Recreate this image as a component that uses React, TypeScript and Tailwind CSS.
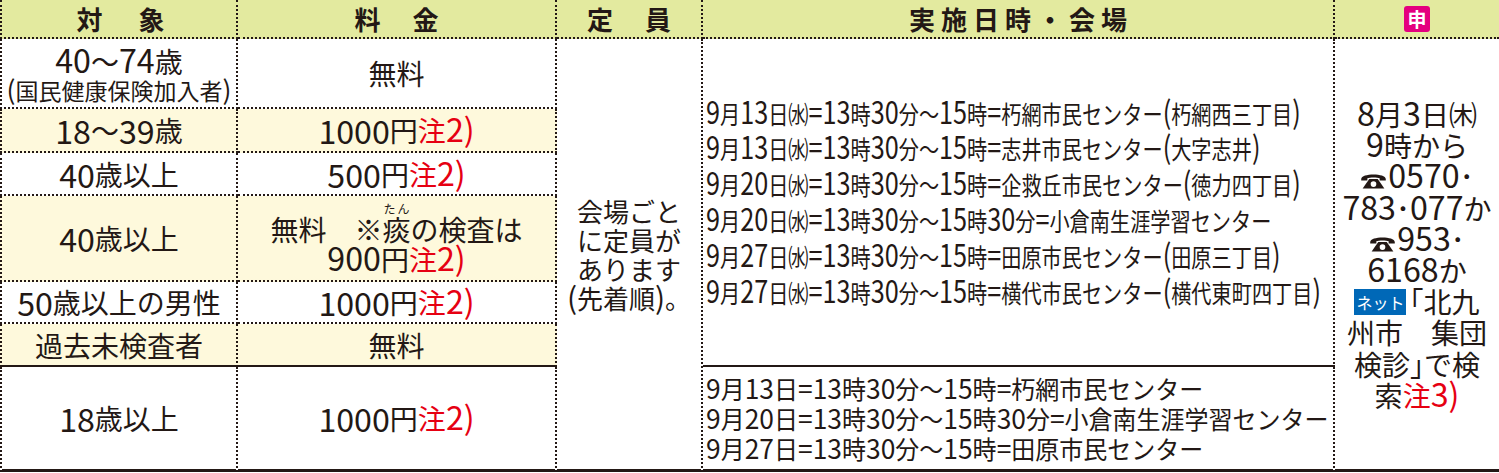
import React from "react";

const LATIN = /([0-9=()]+)/;

// digits and ascii punctuation sit a bit larger than the kana, as in print
function Mix({ text, latin = "text-[1.15em]" }: { text: string; latin?: string }) {
  return (
    <>
      {text.split(LATIN).map((part, i) =>
        i % 2 === 1 ? (
          <span key={i} className={`${latin} leading-[0]`}>
            {part}
          </span>
        ) : (
          <React.Fragment key={i}>{part}</React.Fragment>
        ),
      )}
    </>
  );
}

function Note({ text }: { text: string }) {
  return (
    <span className="text-[#e60012]">
      <Mix text={text} />
    </span>
  );
}

function Phone() {
  return (
    <svg viewBox="0 0 28 18" className="mr-[1px] inline-block h-[17px] w-[27px] align-[-1px]">
      <path
        d="M1 7.5C1 1.2 27 1.2 27 7.5V9H20.5V6.6C18 5.4 10 5.4 7.5 6.6V9H1Z"
        fill="#231815"
      />
      <path d="M9.5 7.5H18.5L25.5 17.5H2.5Z" fill="#231815" />
      <circle cx="14" cy="12.8" r="3" fill="#fff" />
    </svg>
  );
}

const upperLines = [
  "9月13日㈬=13時30分〜15時=朽網市民センター(朽網西三丁目)",
  "9月13日㈬=13時30分〜15時=志井市民センター(大字志井)",
  "9月20日㈬=13時30分〜15時=企救丘市民センター(徳力四丁目)",
  "9月20日㈬=13時30分〜15時30分=小倉南生涯学習センター",
  "9月27日㈬=13時30分〜15時=田原市民センター(田原三丁目)",
  "9月27日㈬=13時30分〜15時=横代市民センター(横代東町四丁目)",
];

const lowerLines = [
  "9月13日=13時30分〜15時=朽網市民センター",
  "9月20日=13時30分〜15時30分=小倉南生涯学習センター",
  "9月27日=13時30分〜15時=田原市民センター",
];

const head =
  "flex items-center justify-center bg-[#e3ea9f] border-b-2 border-dotted border-[#231815] text-[26px] font-bold leading-none";
const left =
  "flex items-center justify-center border-l-2 border-r-2 border-b-2 border-dotted border-[#231815] text-[28px] leading-[30px] whitespace-nowrap";
const mid =
  "flex items-center justify-center border-r-2 border-b-2 border-dotted border-[#231815] text-[28px] leading-[30px] whitespace-nowrap";
const cream = "bg-[#fef9dc]";
const solidBottom = "[border-bottom-style:solid]";

export default function App() {
  return (
    <div className="h-[473px] w-[1499px] bg-white font-['Noto_Sans_CJK_JP',sans-serif] text-[#231815]">
      <div className="grid grid-cols-[238px_319px_146px_632px_164px] grid-rows-[39px_70px_44px_43px_86px_42px_43px_105px]">
        {/* header */}
        <div className={`${head} border-l-2 border-r-2 pl-[8px] tracking-[5px]`}>対　象</div>
        <div className={`${head} border-r-2 pl-[3px] tracking-[3px]`}>料　金</div>
        <div className={`${head} border-r-2 pl-[3px] tracking-[3px]`}>定　員</div>
        <div className={`${head} border-r-2 pl-[6px] tracking-[6px]`}>実施日時・会場</div>
        <div className={head}>
          <span className="flex h-[26px] w-[26px] items-center justify-center rounded-[3px] bg-[#e4007f] text-[19px] font-bold leading-none text-white">
            申
          </span>
        </div>

        {/* row 1 */}
        <div className={`${left} col-start-1 row-start-2 flex-col pt-[5px]`}>
          <div className="leading-[29px]">
            <Mix text="40〜74歳" />
          </div>
          <div className="text-[23px] leading-[29px]">
            <Mix text="(国民健康保険加入者)" />
          </div>
        </div>
        <div className={`${mid} col-start-2 row-start-2`}>無料</div>

        {/* 定員 */}
        <div
          className={`col-start-3 row-start-2 row-span-7 flex flex-col items-center justify-center border-r-2 border-b-[3px] border-dotted border-[#231815] ${solidBottom} text-[26px] leading-[29px] whitespace-nowrap`}
        >
          <div>会場ごと</div>
          <div>に定員が</div>
          <div>あります</div>
          <div>
            <Mix text="(先着順)" />。
          </div>
        </div>

        {/* 実施日時・会場 upper */}
        <div
          className={`col-start-4 row-start-2 row-span-6 flex flex-col justify-center border-r-2 border-b-2 border-dotted border-[#231815] ${solidBottom} pl-[3px] pt-[2px] text-[25px] leading-[35.8px]`}
        >
          <div className="origin-left scale-x-[0.807] whitespace-nowrap">
            {upperLines.map((line) => (
              <div key={line}>
                <Mix text={line} latin="text-[1.25em]" />
              </div>
            ))}
          </div>
        </div>

        {/* 申込 */}
        <div
          className={`col-start-5 row-start-2 row-span-7 flex flex-col items-center justify-center border-b-[3px] border-solid border-[#231815] pt-[2px] text-[28px] leading-[31.2px] whitespace-nowrap`}
        >
          <div>
            <Mix text="8月3日㈭" />
          </div>
          <div>
            <Mix text="9時から" />
          </div>
          <div>
            <Phone />
            <Mix text="0570" />･
          </div>
          <div>
            <Mix text="783" />･<Mix text="077" />か
          </div>
          <div>
            <Phone />
            <Mix text="953" />･
          </div>
          <div>
            <Mix text="6168" />か
          </div>
          <div className="flex items-center">
            <span className="mr-[3px] inline-flex h-[26px] w-[52px] items-center justify-center bg-[#0068b7] text-[16px] leading-none text-white">
              ネット
            </span>
            ｢北九
          </div>
          <div>州市　集団</div>
          <div>検診｣で検</div>
          <div>
            索<Note text="注3)" />
          </div>
        </div>

        {/* row 2 */}
        <div className={`${left} ${cream} col-start-1 row-start-3`}>
          <Mix text="18〜39歳" />
        </div>
        <div className={`${mid} ${cream} col-start-2 row-start-3`}>
          <Mix text="1000円" />
          <Note text="注2)" />
        </div>

        {/* row 3 */}
        <div className={`${left} col-start-1 row-start-4`}>
          <Mix text="40歳以上" />
        </div>
        <div className={`${mid} col-start-2 row-start-4`}>
          <Mix text="500円" />
          <Note text="注2)" />
        </div>

        {/* row 4 */}
        <div className={`${left} ${cream} col-start-1 row-start-5`}>
          <Mix text="40歳以上" />
        </div>
        <div className={`${mid} ${cream} col-start-2 row-start-5 flex-col`}>
          <div>
            無料　※
            <ruby>
              痰<rt className="text-[12px] leading-none">たん</rt>
            </ruby>
            の検査は
          </div>
          <div>
            <Mix text="900円" />
            <Note text="注2)" />
          </div>
        </div>

        {/* row 5 */}
        <div className={`${left} col-start-1 row-start-6`}>
          <Mix text="50歳以上の男性" />
        </div>
        <div className={`${mid} col-start-2 row-start-6`}>
          <Mix text="1000円" />
          <Note text="注2)" />
        </div>

        {/* row 6 */}
        <div className={`${left} ${cream} ${solidBottom} col-start-1 row-start-7`}>過去未検査者</div>
        <div className={`${mid} ${cream} ${solidBottom} col-start-2 row-start-7`}>無料</div>

        {/* row 7 */}
        <div className={`${left} ${solidBottom} col-start-1 row-start-8 border-b-[3px]`}>
          <Mix text="18歳以上" />
        </div>
        <div className={`${mid} ${solidBottom} col-start-2 row-start-8 border-b-[3px]`}>
          <Mix text="1000円" />
          <Note text="注2)" />
        </div>

        {/* 実施日時・会場 lower */}
        <div
          className={`col-start-4 row-start-8 flex flex-col justify-center border-r-2 border-b-[3px] border-dotted border-[#231815] ${solidBottom} pl-[3px] text-[25px] leading-[30px]`}
        >
          <div className="origin-left scale-x-[0.96] whitespace-nowrap">
            {lowerLines.map((line) => (
              <div key={line}>
                <Mix text={line} latin="text-[1.1em]" />
              </div>
            ))}
          </div>
        </div>
      </div>
    </div>
  );
}
